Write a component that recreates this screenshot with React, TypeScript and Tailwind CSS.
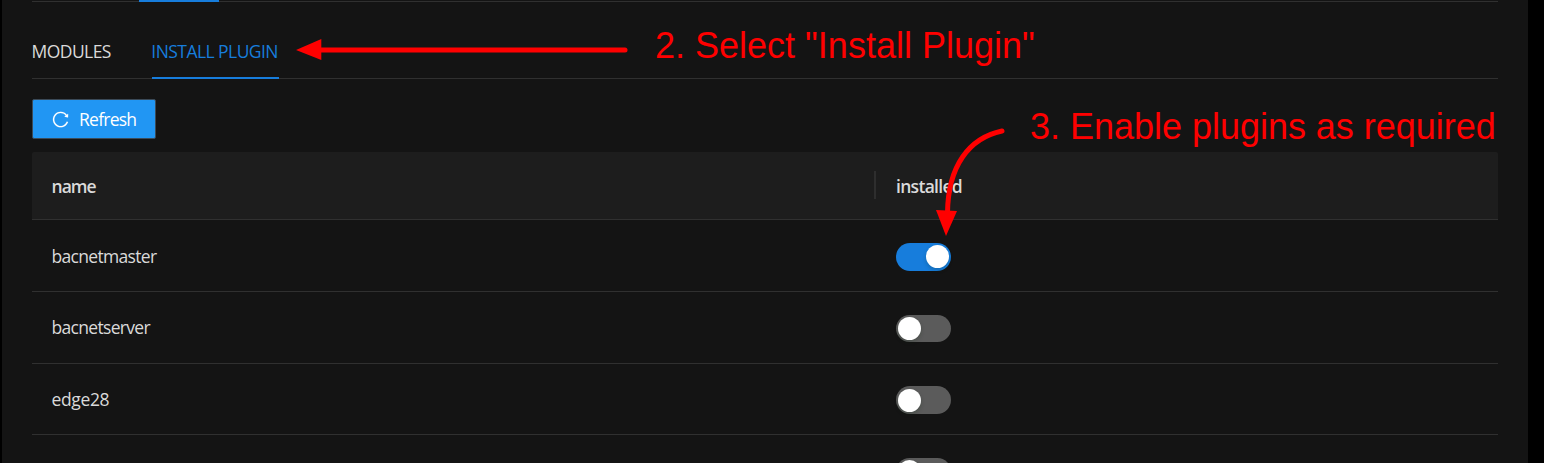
import { AiOutlineReload } from "react-icons/ai";
import clsx from "clsx";

type Plugin = { name: string; installed: boolean; row: string; label: string };

const plugins: Plugin[] = [
  { name: "bacnetmaster", installed: true, row: "h-[72px] pt-[2px]", label: "tracking-[-0.68px]" },
  { name: "bacnetserver", installed: false, row: "h-[72px] pt-[2px]", label: "pb-[2px] tracking-[-0.68px]" },
  { name: "edge28", installed: false, row: "h-[71px] pt-[2px]", label: "pb-[2px] tracking-[-0.35px]" },
  { name: "", installed: false, row: "h-[72px] pt-[2px]", label: "" },
];

function Switch({ on }: { on: boolean }) {
  return (
    <span
      role="switch"
      aria-checked={on}
      className={clsx(
        "flex w-[55px] items-center rounded-full pl-[1.7px] pr-[2.2px]",
        on ? "h-7 justify-end bg-[#177ddc]" : "h-[27.5px] justify-start bg-[#5b5b5b]",
      )}
    >
      <span className="size-[23px] rounded-full bg-white shadow-[0_2px_4px_rgba(0,35,11,0.2)]" />
    </span>
  );
}

function PluginTable() {
  return (
    <div className="mt-[13px] shrink-0">
      <div className="flex h-[68px] items-center rounded-t-[2px] border-b border-[#303030] bg-[#1d1d1d] pb-px font-semibold">
        <div className="flex h-7 w-[844px] items-center border-r-2 border-[#2e2e2e] pl-[19.5px] pt-[2px] tracking-[-0.95px]">name</div>
        <div className="pl-5 pt-[2px] tracking-[-0.7px]">installed</div>
      </div>
      {plugins.map((p, i) => (
        <div key={i} className={clsx("flex items-center border-b border-[#303030]", p.row)}>
          <div className={clsx("w-[864px] pl-[19.5px]", p.label)}>{p.name}</div>
          <Switch on={p.installed} />
        </div>
      ))}
    </div>
  );
}

function Annotations() {
  return (
    <div className="pointer-events-none absolute inset-0 font-['Liberation_Sans',Arial,sans-serif] text-[36px] leading-[40px] text-[#ff0000]">
      <svg className="absolute inset-0" width="1544" height="463" viewBox="0 0 1544 463" fill="none">
        <path d="M320 50H625" stroke="#f00" strokeWidth="5" strokeLinecap="round" />
        <path d="M296 50L321.300 39V60Z" fill="#f00" />
        <path d="M1002 131C969 138 948 166 947.500 213" stroke="#f00" strokeWidth="5" strokeLinecap="round" />
        <path d="M946 236L936 210L957 211Z" fill="#f00" />
      </svg>
      <span className="absolute left-[655px] top-[26px] whitespace-nowrap">2. Select "Install Plugin"</span>
      <span className="absolute left-[1030px] top-[107px] whitespace-nowrap tracking-[-0.02px]">3. Enable plugins as required</span>
    </div>
  );
}

export default function App() {
  return (
    <div className="relative h-[463px] w-[1544px] overflow-hidden bg-black pl-[2px] pr-4 font-['Open_Sans','Noto_Sans',sans-serif] text-[17.5px] text-[#dadada]">
      <main className="flex h-full flex-col overflow-hidden bg-[#141414] pl-[30px] pr-[30px]">
        <div className="flex h-[2px] shrink-0 items-end border-b border-[#303030] pl-[107px]">
          <span className="-mb-px h-[2px] w-20 bg-[#177ddc]" />
        </div>
        <nav className="flex h-[77px] shrink-0 gap-10 border-b border-[#303030]">
          <span className="-ml-[0.5px] flex w-20 items-center whitespace-nowrap pb-[3px] pt-[26px] tracking-[-0.55px]">MODULES</span>
          <span className="-mb-px ml-[0.5px] flex w-[127px] items-center whitespace-nowrap border-b-2 border-[#177ddc] pt-6 tracking-[-0.55px] text-[#177ddc]">
            <span className="-ml-[0.7px]">INSTALL PLUGIN</span>
          </span>
        </nav>
        <button className="mt-5 flex h-10 w-[124px] shrink-0 items-center rounded-[2px] border border-[#3b4a58] bg-[#2196f3] pl-[18px] text-white">
          <AiOutlineReload size={19} stroke="currentColor" strokeWidth={6} />
          <span className="ml-[9px] tracking-[-0.75px]">Refresh</span>
        </button>
        <PluginTable />
      </main>
      <Annotations />
    </div>
  );
}
